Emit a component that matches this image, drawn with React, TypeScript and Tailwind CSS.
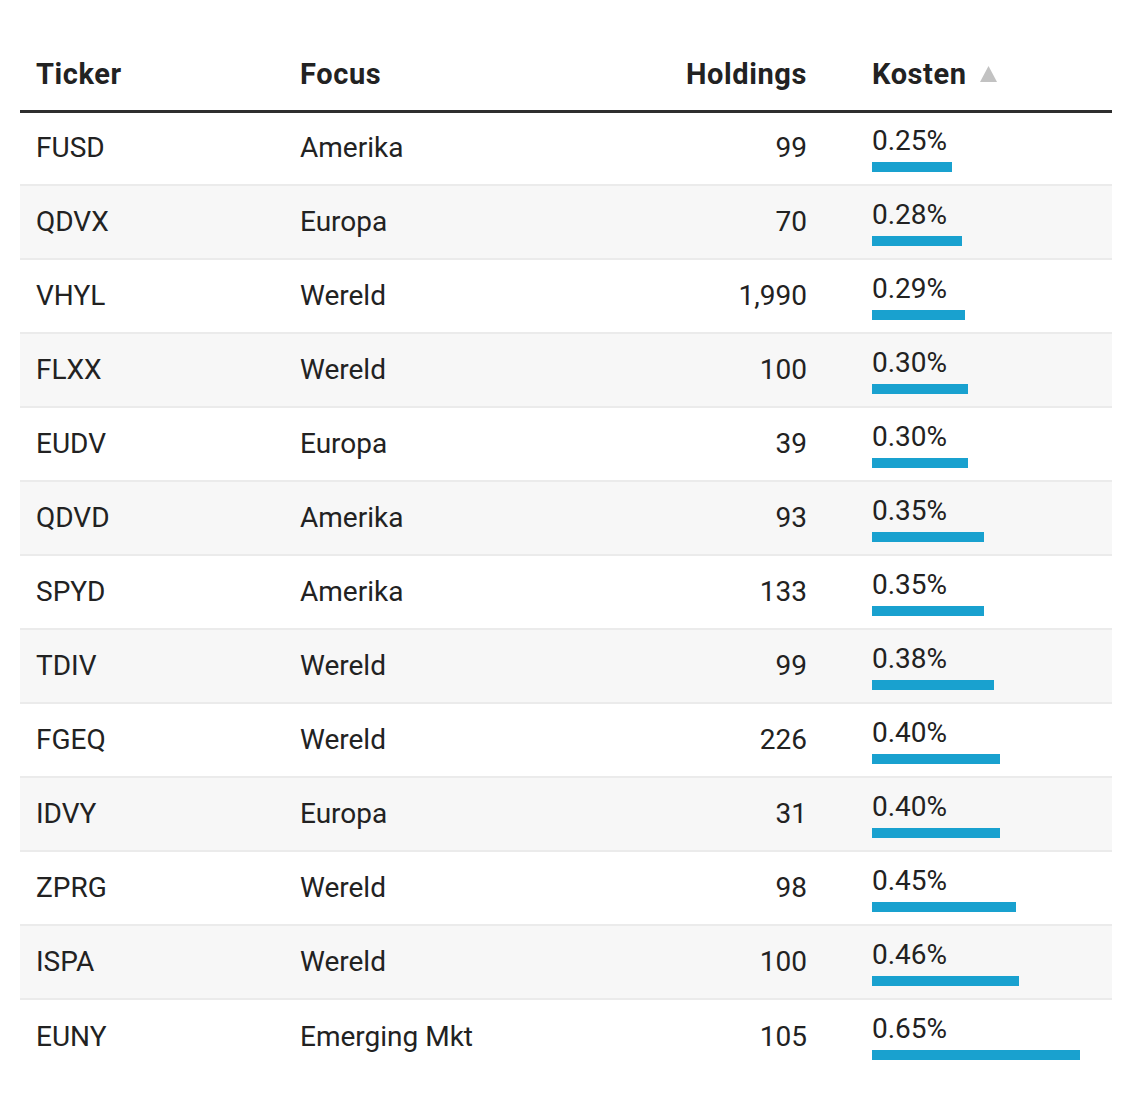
const rows = [
  { ticker: "FUSD", focus: "Amerika", holdings: "99", cost: 0.25 },
  { ticker: "QDVX", focus: "Europa", holdings: "70", cost: 0.28 },
  { ticker: "VHYL", focus: "Wereld", holdings: "1,990", cost: 0.29 },
  { ticker: "FLXX", focus: "Wereld", holdings: "100", cost: 0.3 },
  { ticker: "EUDV", focus: "Europa", holdings: "39", cost: 0.3 },
  { ticker: "QDVD", focus: "Amerika", holdings: "93", cost: 0.35 },
  { ticker: "SPYD", focus: "Amerika", holdings: "133", cost: 0.35 },
  { ticker: "TDIV", focus: "Wereld", holdings: "99", cost: 0.38 },
  { ticker: "FGEQ", focus: "Wereld", holdings: "226", cost: 0.4 },
  { ticker: "IDVY", focus: "Europa", holdings: "31", cost: 0.4 },
  { ticker: "ZPRG", focus: "Wereld", holdings: "98", cost: 0.45 },
  { ticker: "ISPA", focus: "Wereld", holdings: "100", cost: 0.46 },
  { ticker: "EUNY", focus: "Emerging Mkt", holdings: "105", cost: 0.65 },
];

export default function App() {
  return (
    <div className="min-h-screen bg-white px-5 pt-10 text-[28px] text-[#222] [font-family:Roboto,'Liberation_Sans',sans-serif]">
      <table className="w-full table-fixed border-collapse">
        <colgroup>
          <col className="w-[264px]" />
          <col className="w-[300px]" />
          <col className="w-[239px]" />
          <col />
        </colgroup>
        <thead>
          <tr className="h-[71px] border-b-[3px] border-[#2e2e2e] text-[29px] tracking-[0.6px]">
            <th className="pl-4 text-left font-bold">Ticker</th>
            <th className="pl-4 text-left font-bold">Focus</th>
            <th className="pr-4 text-right font-bold">Holdings</th>
            <th className="pl-[49px] text-left font-bold">
              <span className="inline-flex items-center gap-[13px]">
                Kosten
                <svg width="17" height="16" viewBox="0 0 17 16" className="mb-[2px]">
                  <path d="M8.5 0 L17 16 L0 16 Z" fill="#c2c2c2" />
                </svg>
              </span>
            </th>
          </tr>
        </thead>
        <tbody>
          {rows.map((r, i) => (
            <tr
              key={r.ticker}
              className={`h-[74px] ${i < rows.length - 1 ? "border-b-2 border-[#ebebeb]" : ""} ${
                i % 2 === 1 ? "bg-[#f7f7f7]" : "bg-white"
              }`}
            >
              <td className="pl-4">{r.ticker}</td>
              <td className="pl-4">{r.focus}</td>
              <td className="pr-4 text-right">{r.holdings}</td>
              <td className="pl-[49px]">
                <div className="leading-[32px]">{r.cost.toFixed(2)}%</div>
                <div className="mt-[5px] h-[10px] bg-[#19a1cf]" style={{ width: `${r.cost * 320}px` }} />
              </td>
            </tr>
          ))}
        </tbody>
      </table>
    </div>
  );
}
